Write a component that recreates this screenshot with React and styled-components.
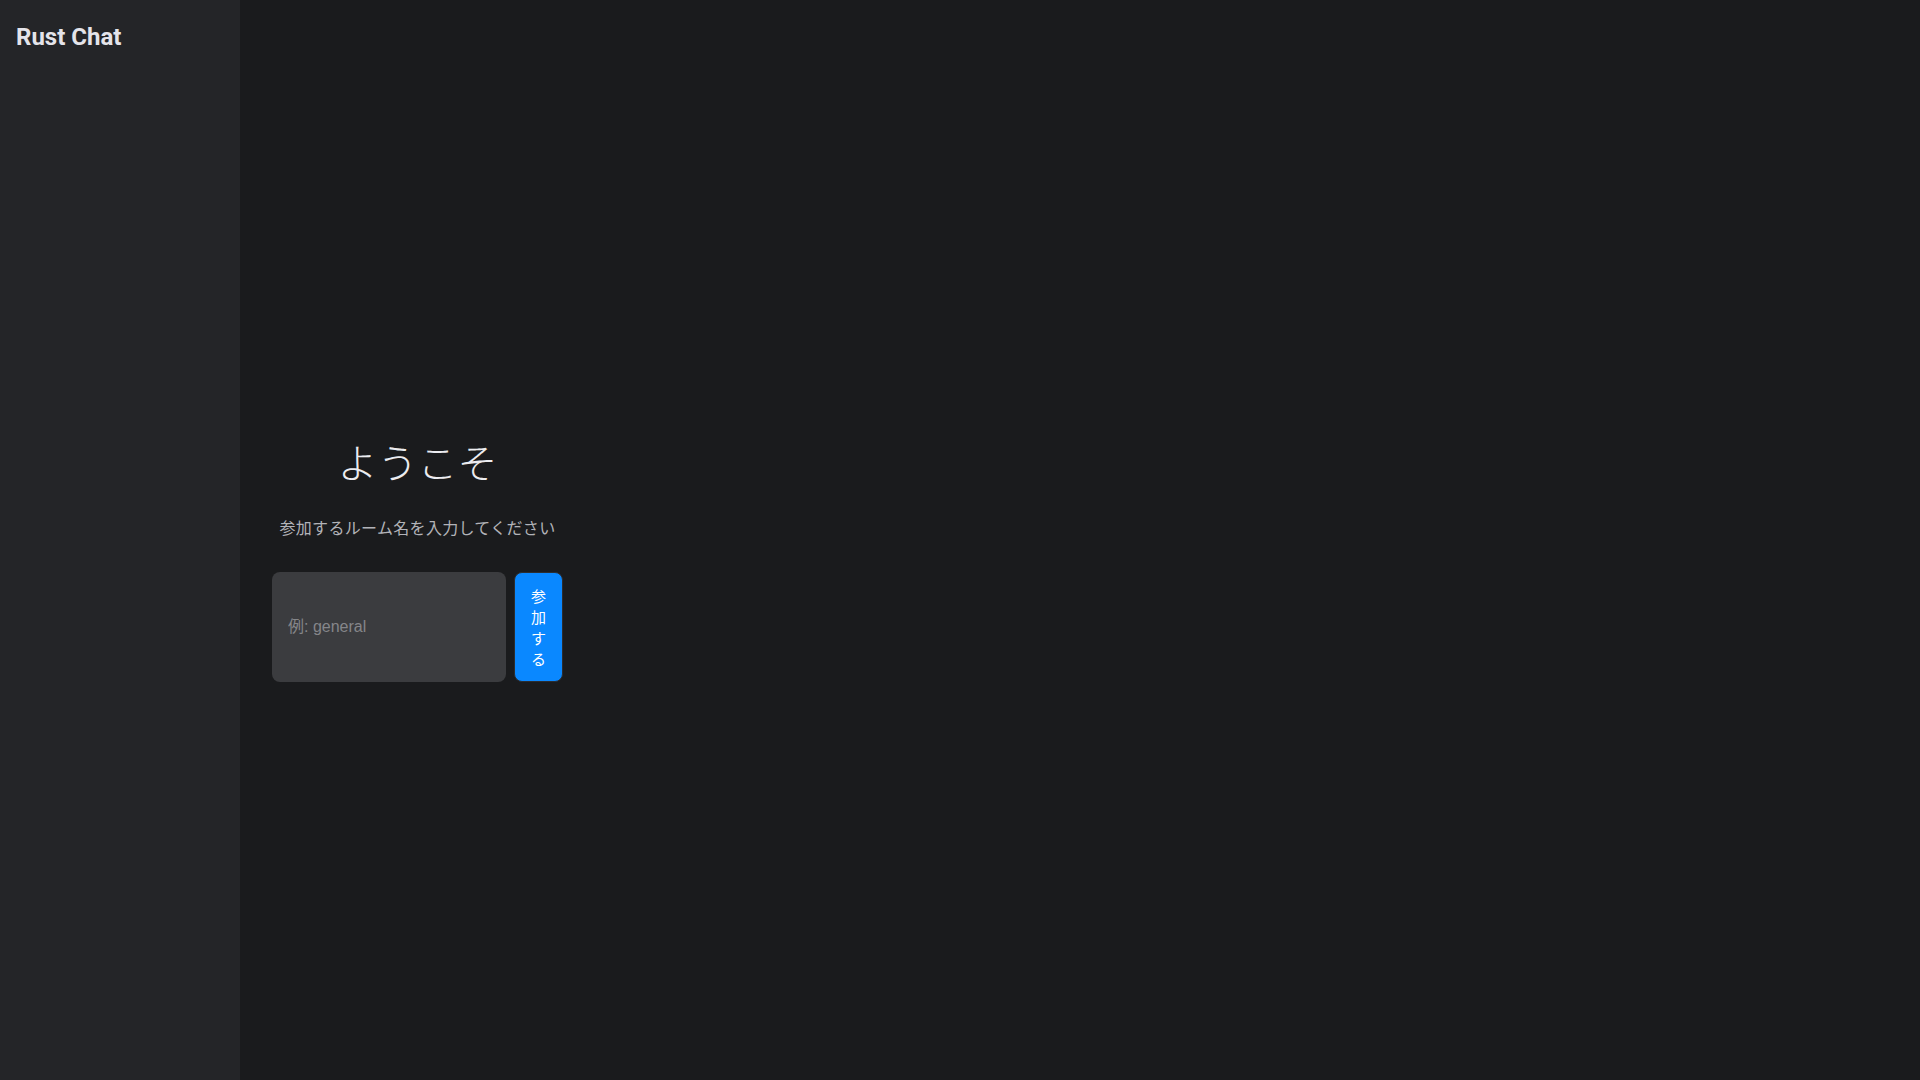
import React from 'react';
import styled, { createGlobalStyle } from 'styled-components';

const GlobalStyle = createGlobalStyle`
  html, body {
    margin: 0;
    padding: 0;
    height: 100%;
  }
  body {
    background: #1a1b1d;
    font-family: Roboto, "Noto Sans CJK JP", sans-serif;
    color: #e6e6ea;
  }
  #root {
    height: 100%;
  }
`;

const Layout = styled.div`
  display: flex;
  height: 100vh;
`;

const Sidebar = styled.aside`
  width: 240px;
  flex-shrink: 0;
  background: #242528;
  padding: 23px 16px 16px;
  box-sizing: border-box;
`;

const Brand = styled.h2`
  margin: 0;
  font-size: 24px;
  font-weight: 700;
  line-height: normal;
  color: #e4e4ea;
`;

const Main = styled.main`
  flex: 1;
  display: flex;
  flex-direction: column;
  justify-content: center;
  align-items: flex-start;
  padding: 0 32px;
`;

const Welcome = styled.div`
  width: 291px;
  text-align: center;
`;

const Heading = styled.h1`
  margin: 34px 0 25px;
  font-family: "Noto Sans CJK JP", sans-serif;
  font-size: 40px;
  font-weight: 300;
  line-height: normal;
  color: #ececf0;
`;

const Lead = styled.p`
  margin: 0 0 33px;
  font-family: "Noto Sans CJK JP", sans-serif;
  font-size: 16px;
  font-weight: 400;
  letter-spacing: 0.02em;
  line-height: normal;
  color: #b2b3b8;
`;

const JoinForm = styled.form`
  display: flex;
  gap: 8px;
`;

const RoomInput = styled.input`
  flex: 1;
  min-width: 0;
  padding: 12px 16px;
  border: none;
  border-radius: 8px;
  background: #3b3c3f;
  color: #e6e6ea;
  font-family: "Liberation Sans", "Noto Sans CJK JP", sans-serif;
  font-size: 16px;
  outline: none;

  &::placeholder {
    color: #85868a;
  }
`;

const JoinButton = styled.button`
  width: min-content;
  flex-shrink: 0;
  padding: 12px 16px;
  border: 1px solid #2c2d30;
  border-radius: 8px;
  background: #0a88ff;
  color: #ffffff;
  font-family: "Noto Sans CJK JP", sans-serif;
  font-size: 15px;
  font-weight: 400;
  line-height: 1.4;
  cursor: pointer;
`;

const App = () => {
  return (
    <>
      <GlobalStyle />
      <Layout>
        <Sidebar>
          <Brand>Rust Chat</Brand>
        </Sidebar>
        <Main>
          <Welcome>
            <Heading>ようこそ</Heading>
            <Lead>参加するルーム名を入力してください</Lead>
            <JoinForm onSubmit={(e) => e.preventDefault()}>
              <RoomInput placeholder="例: general" />
              <JoinButton type="submit">参加する</JoinButton>
            </JoinForm>
          </Welcome>
        </Main>
      </Layout>
    </>
  );
};

export default App;
